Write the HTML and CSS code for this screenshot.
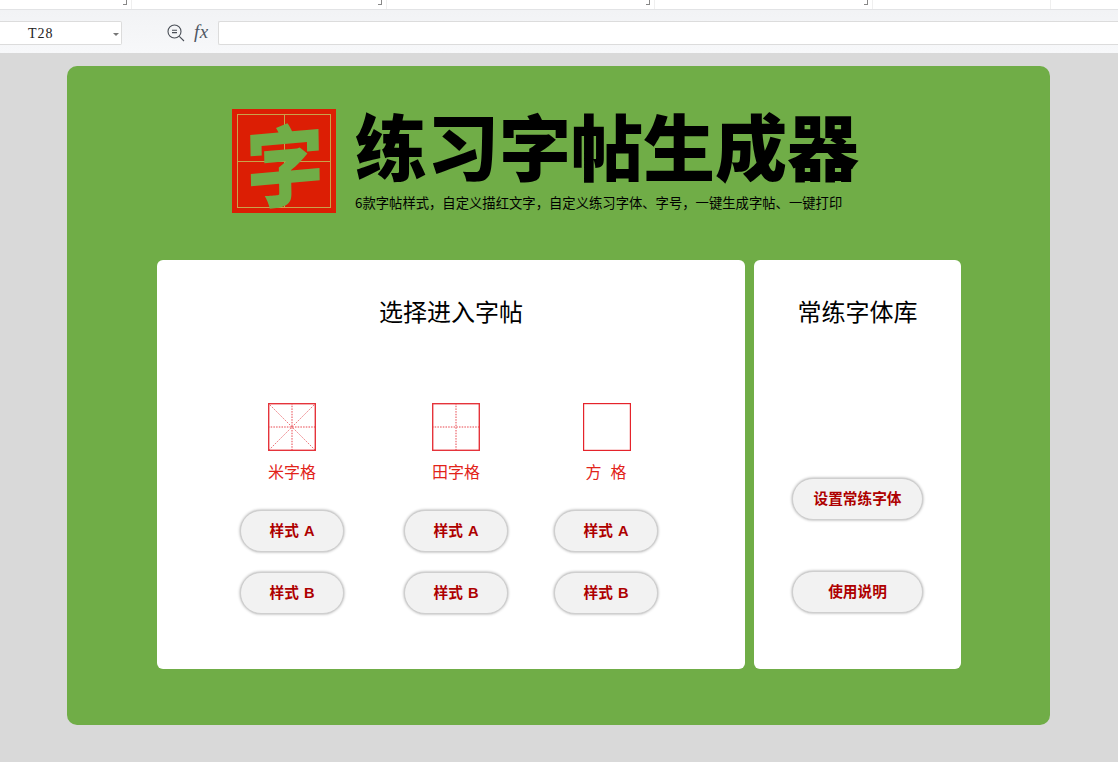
FILE: index.html
```html
<!DOCTYPE html>
<html lang="zh-CN">
<head>
<meta charset="utf-8">
<title>练习字帖生成器</title>
<link rel="stylesheet" href="styles.css">
</head>
<body>
<div class="sheet-top">
  <div class="ribbon">
    <span class="group g1"><i class="tick"></i></span>
    <span class="group g2"><i class="tick"></i></span>
    <span class="group g3"><i class="tick"></i></span>
    <span class="group g4"><i class="tick"></i></span>
    <span class="group g5"></span>
  </div>
  <div class="formula">
    <div class="namebox"><span class="cell">T28</span><span class="caret"></span></div>
    <svg class="zoom-ic" width="18" height="18" viewBox="0 0 18 18" fill="none" stroke="#4a4f57" stroke-width="1.1"><circle cx="7.500" cy="7.500" r="6.500"/><path d="M5 6.300h5M5 8.600h5M12.300 12.300l4.700 4.700"/></svg>
    <span class="fx">fx</span>
    <div class="fbar"></div>
  </div>
</div>
<main class="stage">
  <section class="card">
    <header class="brand">
      <div class="logo"><span class="logo-v"></span><span class="logo-h"></span><span class="logo-char">字</span></div>
      <div class="brand-text">
        <h1>练习字帖生成器</h1>
        <p>6款字帖样式，自定义描红文字，自定义练习字体、字号，一键生成字帖、一键打印</p>
      </div>
    </header>
    <div class="panels">
      <div class="panel panel-main">
        <h2>选择进入字帖</h2>
        <div class="cols">
          <div class="col col-first">
            <svg class="grid" width="48" height="48" viewBox="0 0 48 48" fill="none"><path d="M0 24h48M24 0v48" stroke="#e8454c" stroke-dasharray="1.500 1.200"/><path d="M0 0l48 48M48 0L0 48" stroke="#ec7378" stroke-dasharray="1.500 1.200"/><rect x=".7" y=".7" width="46.600" height="46.600" stroke="#e5343b" stroke-width="1.400"/></svg>
            <div class="lbl">米字格</div>
            <button class="pill">样式 A</button>
            <button class="pill">样式 B</button>
          </div>
          <div class="col">
            <svg class="grid" width="48" height="48" viewBox="0 0 48 48" fill="none"><path d="M0 24h48M24 0v48" stroke="#e8454c" stroke-dasharray="1.500 1.200"/><rect x=".7" y=".7" width="46.600" height="46.600" stroke="#e5343b" stroke-width="1.400"/></svg>
            <div class="lbl">田字格</div>
            <button class="pill">样式 A</button>
            <button class="pill">样式 B</button>
          </div>
          <div class="col">
            <svg class="grid grid-plain" width="48" height="48" viewBox="0 0 48 48" fill="none"><rect x=".6" y=".6" width="46.800" height="46.800" stroke="#e5232b" stroke-width="1.200"/></svg>
            <div class="lbl">方&nbsp;&nbsp;格</div>
            <button class="pill">样式 A</button>
            <button class="pill">样式 B</button>
          </div>
        </div>
      </div>
      <div class="panel panel-side">
        <h2>常练字体库</h2>
        <button class="pill pill-wide first">设置常练字体</button>
        <button class="pill pill-wide second">使用说明</button>
      </div>
    </div>
  </section>
</main>
</body>
</html>
```
FILE: styles.css
```css
* { box-sizing: border-box; }
html, body { margin: 0; height: 762px; overflow: hidden; }
body { background: #d9d9d9; font-family: "Liberation Sans", "Noto Sans CJK SC", sans-serif; color: #000; }

.sheet-top { height: 53px; background: #f5f6f8; border-bottom: 1px solid #e8e8e8; }
.ribbon { height: 10px; display: flex; background: #fff; border-bottom: 1px solid #e2e3e5; }
.group { position: relative; border-right: 1px solid #efefef; height: 9px; }
.g1 { width: 132px; }
.g2 { width: 255px; }
.g3 { width: 268px; }
.g4 { width: 218px; }
.g5 { width: 178px; }
.tick { position: absolute; right: 4px; top: 0; width: 4px; height: 5px; border-right: 1px solid #888; border-bottom: 1px solid #888; }
.formula { height: 43px; display: flex; align-items: flex-start; padding-top: 11px; background: linear-gradient(#f2f3f5, #f7f8fa); }
.namebox { width: 122px; height: 24px; background: #fff; border: 1px solid #dcdcdc; border-left: 0; border-radius: 0 2px 2px 0; display: flex; align-items: center; position: relative; }
.cell { font-family: "Liberation Serif", serif; font-size: 14px; letter-spacing: 1px; margin: 2px 0 0 28px; color: #222; }
.caret { position: absolute; right: 2px; top: 11px; border: 3px solid transparent; border-top: 3px solid #777; border-bottom: 0; }
.zoom-ic { margin: 3px 0 0 45px; }
.fx { font-family: "Liberation Serif", serif; font-style: italic; font-size: 19px; letter-spacing: .5px; color: #4f5763; margin: 0 0 0 9px; width: 24px; line-height: 22px; }
.fbar { flex: 1; height: 24px; background: #fff; border: 1px solid #dcdcdc; border-right: 0; border-radius: 2px 0 0 2px; }

.stage { padding: 13px 68px 0 67px; }
.card { height: 659px; background: #70ad47; border-radius: 10px; padding: 43px 89px 0 90px; }

.brand { display: flex; padding-left: 75px; height: 151px; }
.logo { width: 104px; height: 104px; background: #dc1e04; position: relative; margin-right: 19px; display: flex; align-items: center; justify-content: center; }
.logo::before { content: ""; position: absolute; inset: 5px; border: 1px solid #c9a24a; }
.logo-h { position: absolute; left: 5px; right: 5px; top: 52px; height: 1px; background: #c9a24a; }
.logo-v { position: absolute; top: 5px; bottom: 5px; left: 52px; width: 1px; background: #c9a24a; }
.logo-char { position: relative; font: 900 78px/104px "Noto Sans CJK SC", sans-serif; color: #70ad47; transform: translate(1px, 0) rotate(-5deg) skewX(-4deg) scale(1, 1.12); }
.brand-text { display: flex; flex-direction: column; }
h1 { margin: -5px 0 0; font: 900 72px/80px "Noto Sans CJK SC", sans-serif; white-space: nowrap; color: #000; }
.brand-text p { margin: 9px 0 0; font: 400 13.33px/20px "Noto Sans CJK SC", sans-serif; white-space: nowrap; }

.panels { display: flex; gap: 9px; }
.panel { background: #fff; border-radius: 6px; height: 409px; text-align: center; }
.panel-main { width: 588px; }
.panel-side { width: 207px; display: flex; flex-direction: column; align-items: center; }
h2 { margin: 0; padding-top: 34px; padding-bottom: 1px; font: 400 24px/34px "Noto Sans CJK SC", sans-serif; }

.cols { display: flex; gap: 46px; margin: 74px 0 0 83px; }
.col { width: 104px; display: flex; flex-direction: column; align-items: center; }
.col-first { margin-right: 14px; }
.grid { display: block; }
.grid-plain { transform: translateX(1px); }
.lbl { margin-top: 10px; font: 400 16px/23px "Liberation Sans", "Noto Sans CJK SC", sans-serif; color: #e2231a; white-space: nowrap; }
.pill { width: 104px; height: 42px; margin: 0; padding: 0 0 1px; border: 1px solid #cfcfcf; border-radius: 21px; background: #f2f2f2; box-shadow: 0 0 3px rgba(0,0,0,.38); color: #ae0000; font: 700 14.67px/20px "Liberation Sans", "Noto Sans CJK SC", sans-serif; word-spacing: 1px; }
.lbl + .pill { margin-top: 26px; }
.pill + .pill { margin-top: 20px; }
.pill-wide { width: 131px; }
.pill-wide.first { margin-top: 149px; }
.pill-wide.second { margin-top: 51px; }
```
